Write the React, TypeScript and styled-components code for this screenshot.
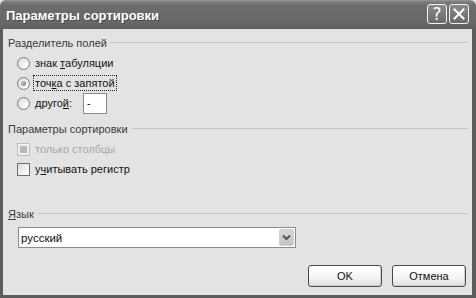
import React from "react";
import styled, { createGlobalStyle } from "styled-components";

const Global = createGlobalStyle`
  html, body { margin: 0; padding: 0; background: #e2e2e2; }
  body { font-family: "Liberation Sans", Arial, sans-serif; font-size: 11px; color: #111; }
  * { box-sizing: border-box; }
`;

const Window = styled.div`
  width: 476px;
  height: 298px;
  display: flex;
  flex-direction: column;
  background: #e2e2e2;
`;

const TitleBar = styled.div`
  height: 29px;
  flex: none;
  display: flex;
  align-items: center;
  padding: 0 7px 0 6px;
  background: linear-gradient(#9a9a9a 0px, #7a7a7a 2px, #6c6c6c 6px, #686868 22px, #5e5e5e 29px);
  border-radius: 6px 6px 0 0;
`;

const Title = styled.div`
  flex: 1;
  color: #fff;
  font-weight: bold;
  font-size: 13px;
  padding-top: 1px;
  text-shadow: 1px 1px 0 #4a4a4a;
`;

const TitleButtons = styled.div`
  display: flex;
  gap: 2px;
  margin-top: -1px;
`;

const TitleButton = styled.div`
  width: 20px;
  height: 20px;
  border: 1px solid #f2f2f2;
  border-radius: 3px;
  background: linear-gradient(#8a8a8a, #6a6a6a);
  color: #fff;
  display: flex;
  align-items: center;
  justify-content: center;
  font-size: 17px;
  font-family: "DejaVu Sans", sans-serif;
  line-height: 1;
`;

const Frame = styled.div`
  flex: 1;
  display: flex;
  flex-direction: column;
  border-left: 3px solid #5c5c5c;
  border-right: 4px solid #5c5c5c;
  border-bottom: 3px solid #5c5c5c;
  padding: 7px 4px 0 5px;
  background: #e3e3e3;
`;

const GroupHeader = styled.div<{ $mt?: number }>`
  display: flex;
  align-items: center;
  gap: 4px;
  height: 14px;
  line-height: 14px;
  margin-top: ${(p) => p.$mt ?? 0}px;
  color: #3a3a3a;
  &::after {
    content: "";
    flex: 1;
    height: 1px;
    background: #c4c4c4;
    margin-top: -1px;
  }
`;

const List = styled.div`
  display: flex;
  flex-direction: column;
  margin-top: 3px;
  padding-left: 9px;
`;

const Row = styled.div<{ $disabled?: boolean }>`
  display: flex;
  align-items: center;
  height: 20px;
  gap: 4px;
  color: ${(p) => (p.$disabled ? "#a6a6a6" : "#111")};
`;

const Radio = styled.span<{ $checked?: boolean }>`
  width: 13px;
  height: 13px;
  border-radius: 50%;
  border: 1px solid #7c7c7c;
  background: radial-gradient(circle at 70% 70%, #ffffff 0%, #e6e6e6 60%, #d0d0d0 100%);
  display: flex;
  align-items: center;
  justify-content: center;
  &::after {
    content: "";
    width: 5px;
    height: 5px;
    border-radius: 50%;
    background: ${(p) => (p.$checked ? "radial-gradient(circle at 35% 35%, #c8c8c8, #707070)" : "transparent")};
  }
`;

const Check = styled.span<{ $disabled?: boolean; $filled?: boolean }>`
  width: 13px;
  height: 13px;
  border: 1px solid ${(p) => (p.$disabled ? "#bcbcbc" : "#6e6e6e")};
  background: ${(p) => (p.$disabled ? "#f0f0f0" : "linear-gradient(135deg, #dcdcdc, #ffffff)")};
  display: flex;
  align-items: center;
  justify-content: center;
  &::after {
    content: "";
    width: 7px;
    height: 7px;
    background: ${(p) => (p.$filled ? "#b8b8b8" : "transparent")};
  }
`;

const Label = styled.span<{ $focused?: boolean }>`
  padding: 0 1px;
  line-height: 14px;
  outline: ${(p) => (p.$focused ? "1px dotted #222" : "none")};
  outline-offset: 0px;
`;

const U = styled.span`
  text-decoration: underline;
`;

const SmallInput = styled.div`
  width: 24px;
  height: 21px;
  margin-left: 6px;
  border: 1px solid #8a8a8a;
  background: #fff;
  padding: 2px 0 0 3px;
  line-height: 14px;
`;

const Combo = styled.div`
  width: 278px;
  height: 21px;
  margin: 6px 0 0 10px;
  border: 1px solid #8c8c8c;
  background: #fff;
  display: flex;
  align-items: center;
  padding: 1px 1px 1px 2px;
`;

const ComboText = styled.span`
  flex: 1;
  color: #111;
  font-size: 11.5px;
`;

const ComboButton = styled.div`
  width: 15px;
  height: 17px;
  background: linear-gradient(#d8d8d8, #c4c4c4);
  border: 1px solid #d0d0d0;
  border-radius: 2px;
  display: flex;
  align-items: center;
  justify-content: center;
`;

const Buttons = styled.div`
  display: flex;
  justify-content: flex-end;
  gap: 10px;
  margin-top: 17px;
  padding-right: 2px;
`;

const Button = styled.div`
  width: 74px;
  height: 22px;
  border: 1px solid #4a4a4a;
  border-radius: 3px;
  background: linear-gradient(#ffffff 0%, #f4f4f4 60%, #dedede 100%);
  display: flex;
  align-items: center;
  justify-content: center;
  color: #111;
  box-shadow: inset -1px -1px 0 #cfcfcf;
`;

export default function App() {
  return (
    <>
      <Global />
      <Window>
        <TitleBar>
          <Title>Параметры сортировки</Title>
          <TitleButtons>
            <TitleButton>?</TitleButton>
            <TitleButton>
              <svg width="12" height="12" viewBox="0 0 12 12">
                <path d="M1.5 1.5 L10.5 10.5 M10.5 1.5 L1.5 10.5" stroke="#fff" strokeWidth="2" strokeLinecap="square" />
              </svg>
            </TitleButton>
          </TitleButtons>
        </TitleBar>
        <Frame>
          <GroupHeader>Разделитель полей</GroupHeader>
          <List>
            <Row>
              <Radio />
              <Label>
                знак <U>т</U>абуляции
              </Label>
            </Row>
            <Row>
              <Radio $checked />
              <Label $focused>
                точ<U>к</U>а с запятой
              </Label>
            </Row>
            <Row>
              <Radio />
              <Label>
                друго<U>й</U>:
              </Label>
              <SmallInput>-</SmallInput>
            </Row>
          </List>
          <GroupHeader $mt={9}>Параметры сортировки</GroupHeader>
          <List>
            <Row $disabled>
              <Check $disabled $filled />
              <Label>только столбцы</Label>
            </Row>
            <Row>
              <Check />
              <Label>
                у<U>ч</U>итывать регистр
              </Label>
            </Row>
          </List>
          <GroupHeader $mt={28}>
            <span>
              <U>Я</U>зык
            </span>
          </GroupHeader>
          <Combo>
            <ComboText>русский</ComboText>
            <ComboButton>
              <svg width="9" height="7" viewBox="0 0 9 7">
                <path d="M1 1.5 L4.5 5 L8 1.5" stroke="#555" strokeWidth="2" fill="none" />
              </svg>
            </ComboButton>
          </Combo>
          <Buttons>
            <Button>OK</Button>
            <Button>Отмена</Button>
          </Buttons>
        </Frame>
      </Window>
    </>
  );
}
